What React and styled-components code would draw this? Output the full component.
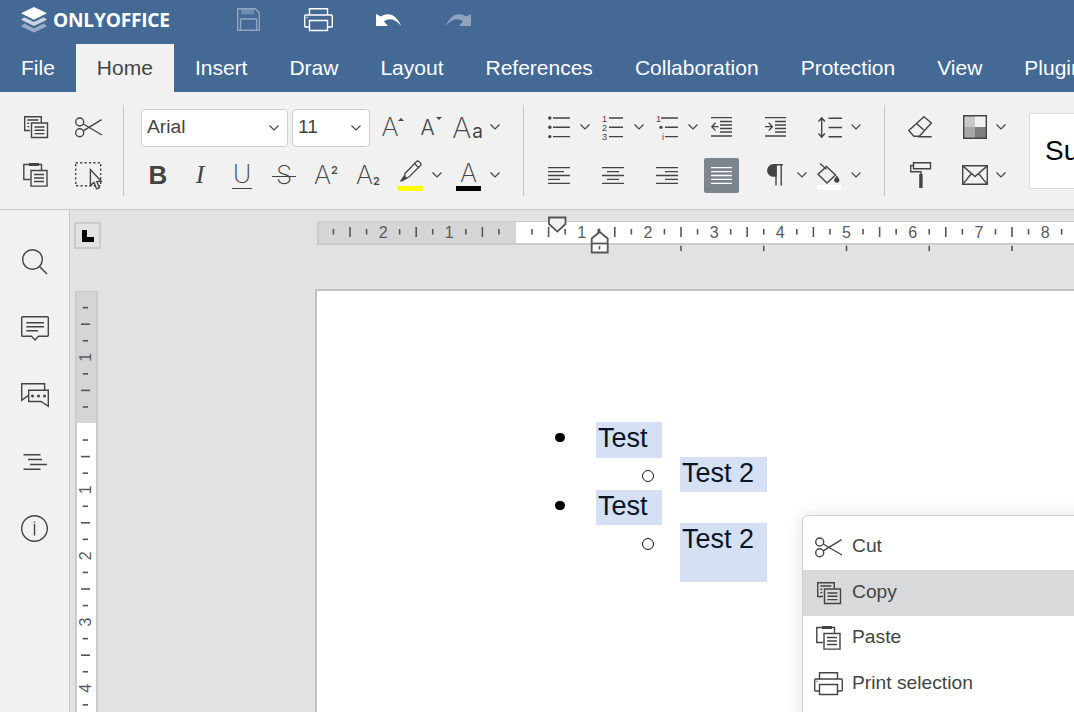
import React from 'react';
import styled, { createGlobalStyle } from 'styled-components';

const Global = createGlobalStyle`
  html, body { margin: 0; padding: 0; background: #e2e2e2; }
  * { box-sizing: border-box; }
  body { font-family: "Liberation Sans", Arial, sans-serif; }
`;

const Root = styled.div`
  position: relative; width: 1074px; height: 712px; overflow: hidden;
  display: flex; flex-direction: column;
`;
const Header = styled.header`
  background: #446995; color: #fff; height: 92px; flex: none;
  display: flex; flex-direction: column;
`;
const TitleBar = styled.div`display: flex; align-items: center; height: 44px; flex: none; padding-bottom: 5px;`;
const Brand = styled.div`display: flex; align-items: center; width: 213.5px; padding-left: 21px; gap: 6px;`;
const BrandName = styled.span`
  font-family: "Open Sans", sans-serif; font-weight: 700; font-size: 19.2px; letter-spacing: -0.25px; line-height: 1;
`;
const QuickTool = styled.div`
  width: 70px; height: 39px; display: flex; align-items: center; justify-content: center;
  opacity: ${p => (p.$off ? 0.4 : 1)};
`;
const Tabs = styled.nav`display: flex; height: 48px; flex: none; overflow: hidden;`;
const Tab = styled.div`
  flex: none; padding: 0 21px; font-size: 21px; line-height: 48px;
  background: ${p => (p.$on ? '#f1f1f1' : 'transparent')};
  color: ${p => (p.$on ? '#444' : '#fff')};
`;

const Toolbar = styled.div`
  flex: none; height: 118px; background: #f1f1f1; border-bottom: 1.5px solid #cbcbcb;
  display: flex; padding-top: 11px; color: #444; overflow: hidden;
`;
const Group = styled.div`
  flex: none; width: ${p => p.$w}px; margin-left: ${p => p.$ml || 0}px;
  padding-left: ${p => p.$pl || 0}px; display: flex; flex-direction: column;
`;
const Row = styled.div`display: flex; align-items: center; height: 48px;`;
const FontRow = styled(Row)`padding-left: 4px;`;
const Sep = styled.div`flex: none; width: 1px; height: 91px; margin-top: 2px; background: #c9c9c9;`;
const Tool = styled.div`
  flex: none; width: ${p => p.$w}px; height: 48px; display: flex; align-items: center; justify-content: center;
`;
const Cell = styled.div`flex: none; width: ${p => p.$w || 54.3}px; display: flex; align-items: center;`;
const ChevBox = styled.div`
  flex: none; width: ${p => p.$w || 16}px; height: 48px; display: flex; align-items: center; justify-content: center;
`;
const Combo = styled.div`
  flex: none; width: ${p => p.$w}px; height: 38px; margin-right: ${p => p.$mr || 0}px; margin-top: 2px;
  background: #fff; border: 1.5px solid #cfcfcf; border-radius: 4px;
  display: flex; align-items: center; justify-content: space-between; padding: 0 8px 0 5px;
  font-size: 19.25px; color: #444;
`;
const ComboText = styled.span`margin-bottom: 2px;`;
const Gallery = styled.div`
  flex: none; width: 120px; height: 76px; margin: 10px 0 0 18px; background: #fff;
  border: 1px solid #dcdcdc; display: flex; align-items: center; padding-left: 15px;
  font-size: 28px; color: #000; overflow: hidden; white-space: nowrap;
`;
const Letter = styled.span`
  position: relative; display: inline-block; line-height: 1;
  font-family: ${p => p.$family || 'Inter, sans-serif'};
  font-size: ${p => p.$size}px; font-weight: ${p => p.$weight || 300};
  font-style: ${p => (p.$italic ? 'italic' : 'normal')};
  color: #444;
`;
const Underlined = styled(Letter)`
  border-bottom: 1.5px solid #444; padding: 0 1px 1px; margin-top: 1px;
`;
const Struck = styled(Letter)`
  &::after { content: ''; position: absolute; left: -4px; right: -4px; top: 52%; height: 1.5px; background: #444; }
`;
const Small = styled.span`font-size: ${p => p.$size}px; font-weight: ${p => p.$weight || 600};
  vertical-align: ${p => p.$va}; line-height: 0; margin-left: ${p => p.$ml || 0}px;`;
const Caret = styled.span`
  position: absolute; right: ${p => p.$r}px; top: ${p => p.$t}px; width: 0; height: 0;
  border-left: 3px solid transparent; border-right: 3px solid transparent;
  ${p => (p.$down ? 'border-top: 3px solid #444;' : 'border-bottom: 3px solid #444;')}
`;
const Swatch = styled.div`display: flex; flex-direction: column; align-items: center; gap: 0;`;
const ColorBar = styled.div`width: 25px; height: 5px; background: ${p => p.$c}; margin-top: ${p => p.$mt || 0}px;`;
const ActiveBtn = styled.div`
  width: 35px; height: 35px; border-radius: 2px; background: #7d858c;
  display: flex; align-items: center; justify-content: center;
`;

const Body = styled.div`flex: 1; min-height: 0; display: flex;`;
const Rail = styled.aside`
  flex: none; width: 70px; background: #f1f1f1; border-right: 1.5px solid #c8c8c8;
  padding-top: 19px; display: flex; flex-direction: column; color: #444;
`;
const RailBtn = styled.div`height: 66.6px; display: flex; align-items: center; justify-content: center;`;
const Canvas = styled.main`
  flex: 1; min-width: 0; background: #e2e2e2; display: grid;
  grid-template-columns: 245px 1fr; grid-template-rows: 79px 1fr; overflow: hidden;
`;
const Corner = styled.div`
  width: 27px; height: 27px; margin: 12px 0 0 4px; border: 2px solid #cbcbcb;
  display: flex; align-items: center; justify-content: center;
`;
const LMark = styled.div`
  width: 11.5px; height: 11.5px; margin: 1px 0 0 1px; border-left: 5px solid #000; border-bottom: 5px solid #000;
`;
const HRuler = styled.div`
  position: relative; height: 24px; margin: 11px 0 0 2px; display: flex;
  border-top: 1.5px solid #cbcbcb; border-bottom: 2px solid #cbcbcb;
`;
const RulerDark = styled.div`flex: none; width: 199px; background: #d5d5d5; border-left: 2px solid #cbcbcb;`;
const RulerLight = styled.div`flex: 1; background: #fff;`;
const VRuler = styled.div`
  position: relative; width: 23px; margin: 2px 0 0 5px; display: flex; flex-direction: column;
  border-left: 2px solid #cbcbcb; border-right: 2px solid #cbcbcb; border-top: 1.5px solid #cbcbcb;
`;
const VDark = styled.div`flex: none; height: 131px; background: #d5d5d5;`;
const VLight = styled.div`flex: 1; background: #fff;`;
const RulerArt = styled.svg`
  position: absolute; left: ${p => p.$l}px; top: ${p => p.$t}px; overflow: visible;
`;
const Page = styled.section`
  background: #fff; border-top: 2px solid #bfc1c2; border-left: 2px solid #bfc1c2;
  padding-top: 131px; display: flex; flex-direction: column; overflow: hidden;
`;
const Item = styled.div`
  display: flex; align-items: flex-start; flex: none; position: relative;
  margin-left: ${p => p.$ml}px; margin-top: ${p => p.$mt || 0}px;
`;
const Bullet = styled.div`
  flex: none; width: 36px; height: 30px; margin-right: ${p => p.$gap}px;
  display: flex; align-items: center; justify-content: center;
  &::before {
    content: ''; display: block; border-radius: 50%; box-sizing: border-box;
    ${p => (p.$hollow
    ? `width: 12px; height: 12px; border: 1.5px solid #111; background: #fff; margin-top: ${p.$dy || 7.6}px;`
    : 'width: 9.5px; height: 9.5px; background: #000; margin-top: 1.2px;')}
  }
`;
const Selected = styled.div`
  width: ${p => p.$w}px; height: ${p => p.$h}px; padding-left: 2px; background: #d5e0f4; color: #0a1428;
  font-size: 27px; line-height: 33px; white-space: nowrap;
`;
const Menu = styled.div`
  position: absolute; left: 802px; top: 515px; width: 420px; height: 320px;
  background: #fff; border: 1.5px solid #d0d0d0; border-radius: 6px;
  box-shadow: 0 0 16px rgba(0, 0, 0, 0.12); padding-top: 8.5px; color: #444;
`;
const MenuItem = styled.div`
  height: 45.5px; display: flex; align-items: center; font-size: 19.25px;
  background: ${p => (p.$on ? '#d8d9db' : 'transparent')};
`;
const MenuIcon = styled.div`flex: none; width: 49px; display: flex; justify-content: center; padding-left: 2px;`;
const MenuLabel = styled.span`margin-bottom: 2px;`;

const Svg = styled.svg`
  display: block; flex: none; fill: none; stroke: currentColor; stroke-width: ${p => p.$sw || 1.4};
  overflow: visible;
`;
const I = ({ w, h, sw, children }) => (
  <Svg width={w} height={h} viewBox={`0 0 ${w} ${h}`} $sw={sw}>{children}</Svg>
);
const Chev = () => <I w={10} h={6} sw={1.2}><path d="M.5.5 5 5 9.5.5" /></I>;

const Logo = () => (
  <svg width="26" height="26" viewBox="0 0 26 26" style={{ display: 'block', flex: 'none' }}>
    <path d="M13 0 26 6.3 13 12.8 0 6.3z" fill="#fff" />
    <path d="M3.2 10.2 13 15 22.8 10.2 26 12.8 13 19 0 12.8z" fill="#fff" opacity=".72" />
    <path d="M3.2 16.6 13 21.4 22.8 16.6 26 19.2 13 25.6 0 19.2z" fill="#fff" opacity=".45" />
  </svg>
);
const SaveIcon = () => (
  <I w={23} h={23}>
    <path d="M.7.7h17.6l4 4.2v17.4H.7z" />
    <path d="M5 .7h11.5v5H5z" fill="currentColor" opacity=".6" />
    <path d="M3.6 22V11h16v11" />
  </I>
);
const PrintIcon = () => (
  <I w={29} h={23}>
    <path d="M5.5 7V.7h18V7" />
    <path d="M5 19H1.8Q.7 19 .7 17.8V8.2Q.7 7 1.8 7h25.4q1.1 0 1.1 1.2v9.6q0 1.2-1.1 1.2H24" />
    <path d="M5.5 12.5h18v10h-18z" />
    <path d="M2.5 9.5h1" />
  </I>
);
const UndoIcon = ({ flip }) => (
  <svg width="25" height="13" viewBox="0 0 25 13" style={{ display: 'block', transform: flip ? 'scaleX(-1)' : 'none' }}>
    <path d="M0 1v12h12L8 8.4c4.6-3.4 10.6-3 17 4.4C21.6 3.6 13.4-2 5 3.4z" fill="#fff" />
  </svg>
);
const CopyIcon = () => (
  <I w={24} h={22}>
    <path d="M6 14.5H.7V.7h16.6v6" />
    <path d="M7.5 7h16v14.5h-16z" />
    <path d="M3.3 4h11M3.3 7.3h2M3.3 10.6h2M10.5 11h10M10.5 14.3h10M10.5 17.6h10" />
  </I>
);
const ScissorsIcon = () => (
  <I w={27} h={21}>
    <circle cx="4.7" cy="5" r="4" /><circle cx="4.7" cy="15.8" r="4" />
    <path d="M8.2 7 27 18M8.2 13.8 26.6 2.6" />
  </I>
);
const PasteIcon = () => (
  <I w={25} h={24}>
    <path d="M6 1.5H.8v15H7M16 1.5h2.5V7" />
    <path d="M6 0h10v3H6z" fill="currentColor" stroke="none" />
    <path d="M8 7.5h16v15.6H8z" />
    <path d="M11 11.5h10M11 15h10M11 18.5h10" />
  </I>
);
const SelectIcon = () => (
  <I w={27} h={27}>
    <path d="M.7.7h25v23H.7z" strokeDasharray="2.2 2.2" />
    <path d="M15.4 7.5v16l3.6-3 2.6 6.4 2.8-1.3-2.6-6 4.4-.4z" fill="#f1f1f1" />
  </I>
);
const Lines = ({ w, h, rows, sw }) => (
  <I w={w} h={h} sw={sw}>
    <path d={rows.map(([x1, x2], i) => `M${x1} ${0.7 + i * (h - 1.4) / (rows.length - 1)}H${x2}`).join('')} />
  </I>
);
const BulletsIcon = () => (
  <I w={22} h={22}>
    <path d="M5 2h17M5 11.3h17M5 20.6h17" />
    <g fill="currentColor" stroke="none">
      <circle cx="1.8" cy="2" r="1.7" /><circle cx="1.8" cy="11.3" r="1.7" /><circle cx="1.8" cy="20.6" r="1.7" />
    </g>
  </I>
);
const tiny = { fontFamily: 'Liberation Sans, sans-serif', fontSize: 9, fill: '#444', stroke: 'none' };
const NumberIcon = () => (
  <I w={21} h={22}>
    <path d="M7 2h14M7 11.3h14M7 20.6h14" />
    <text x="0" y="5.5" style={tiny}>1</text><text x="0" y="14.5" style={tiny}>2</text><text x="0" y="23.5" style={tiny}>3</text>
  </I>
);
const MultiIcon = () => (
  <I w={22} h={22}>
    <path d="M5 2h17M9 11.3h13M9 20.6h13" />
    <text x="0" y="5.5" style={tiny}>1</text>
    <circle cx="5" cy="11.3" r="1.6" fill="currentColor" stroke="none" />
    <text x="6" y="23.5" style={tiny}>i</text>
  </I>
);
const OutdentIcon = () => (
  <I w={21} h={20} sw={1.3}>
    <path d="M0 .7h21M0 19h21M9 4.5h12M9 8h12M9 11.5h12M9 15h12" />
    <path d="M7.5 9.7H.8M4.5 5.8.8 9.7l3.7 3.9" />
  </I>
);
const IndentIcon = () => (
  <I w={21} h={20} sw={1.3}>
    <path d="M0 .7h21M0 19h21M10 4.5h11M10 8h11M10 11.5h11M10 15h11" />
    <path d="M0 9.7h7.4M3.7 5.8l3.7 3.9-3.7 3.9" />
  </I>
);
const SpacingIcon = () => (
  <I w={24} h={21}>
    <path d="M10.5 1.2h13.5M10.5 10.5h13.5M10.5 19.8h13.5" />
    <path d="M3.7 1v19M.5 4.5l3.2-3.7 3.2 3.7M.5 16.5l3.2 3.7 3.2-3.7" />
  </I>
);
const JustifyIcon = () => (
  <svg width="21" height="17" viewBox="0 0 21 17" style={{ display: 'block', stroke: '#fff', strokeWidth: 1.3 }}>
    <path d="M0 .7h21M0 4.6h21M0 8.5h21M0 12.4h21M0 16.3h21" />
  </svg>
);
const PilcrowIcon = () => (
  <I w={15} h={22}>
    <path d="M8 .7H5.5a5.6 5.6 0 0 0 0 11.4H8z" fill="currentColor" />
    <path d="M7.7.7H15M8 .7V21.5M13.2.7V21.5" />
  </I>
);
const BucketIcon = () => (
  <svg width="24" height="27" viewBox="0 0 24 27" style={{ display: 'block', fill: 'none', stroke: 'currentColor', strokeWidth: 1.4, marginTop: 2, marginLeft: -3 }}>
    <path d="M9.5 3.5 18.5 12 10 20 1 11.3z" />
    <path d="M3 .5 9.5 6.3" />
    <path d="M19.8 12.5c-1.5 2.3-2.6 3.2-2.6 4.6a2.6 2.6 0 0 0 5.2 0c0-1.4-1.1-2.3-2.6-4.6z" fill="currentColor" stroke="none" />
    <path d="M0 22h24v4.7H0z" fill="#fff" stroke="none" />
  </svg>
);
const EraserIcon = () => (
  <I w={24} h={22}>
    <path d="M16 .7 23.4 7 11.3 20.2H6L.8 14.6z" />
    <path d="M8.5 7.5 15.8 14M10 20.8h13.7" />
  </I>
);
const ShadeIcon = () => (
  <svg width="24" height="24" viewBox="0 0 24 24" style={{ display: 'block' }}>
    <path d="M0 0h12v12H0z" fill="#c8c8c8" /><path d="M12 0h12v12H12z" fill="#f1f1f1" />
    <path d="M0 12h12v12H0z" fill="#a8a8a8" /><path d="M12 12h12v12H12z" fill="#7e7e7e" />
    <path d="M.7.7h22.6v22.6H.7z" fill="none" stroke="#444" strokeWidth="1.4" />
  </svg>
);
const RollerIcon = () => (
  <I w={21} h={26}>
    <path d="M3.5.7h17v6h-17z" />
    <path d="M3.5 3.5H.7v6.2h10.3v3" />
    <path d="M9.2 12H12.6v14H9.2z" fill="currentColor" stroke="none" />
  </I>
);
const MailIcon = () => (
  <I w={26} h={20}>
    <path d="M.7.7h24.6v18.6H.7z" />
    <path d="M.7.9 13 11.5 25.3.9M.9 19.1l8.6-10.6M25.1 19.1 16.5 8.5" />
  </I>
);
const PenIcon = () => (
  <svg width="24" height="24" viewBox="0 0 24 24" style={{ display: 'block', fill: 'none', stroke: '#444', strokeWidth: 1.3 }}>
    <path d="M6 13.5 17.5 1.5q1.2-1 2.4 0l1.6 1.6q1 1.2 0 2.4L10 17l-4.5 1.5z" />
    <path d="M15.5 3.5 19.5 7.5" />
    <path d="M5 15 8.5 18.5 3 21.5H.8z" fill="#444" stroke="none" />
  </svg>
);
const SearchIcon = () => (
  <I w={26} h={26}>
    <circle cx="10.5" cy="10.5" r="9.8" /><path d="m17.5 17.5 7.5 7.5" />
  </I>
);
const CommentIcon = () => (
  <I w={28} h={25}>
    <path d="M1.7.7h24.6q1 0 1 1v17.6q0 1-1 1H17.5L14 24l-3.5-3.7H1.7q-1 0-1-1V1.7q0-1 1-1z" />
    <path d="M5.3 6.7h17.7M5.3 10.7h17.7M5.3 14.7h11.7" />
  </I>
);
const ChatIcon = () => (
  <I w={28} h={24}>
    <path d="M7 12.6.7 17.4V.7h22.9V7" />
    <path d="M7.7 7.3h19.6v16L20 18.5H7.7z" />
    <g fill="currentColor" stroke="none">
      <circle cx="11.5" cy="13" r="1.5" /><circle cx="17.5" cy="13" r="1.5" /><circle cx="23.5" cy="13" r="1.5" />
    </g>
  </I>
);
const OutlineIcon = () => (
  <I w={24} h={16}>
    <path d="M.5.7h17M5 5.5h14M7 10.5h17M.5 15.3h17" />
  </I>
);
const InfoIcon = () => (
  <I w={27} h={27}>
    <circle cx="13.5" cy="13.5" r="12.8" />
    <path d="M13.5 9v11.5M13.5 6.5v1.3" />
  </I>
);

const STEP = 16.55;
const range = (a, b) => Array.from({ length: b - a + 1 }, (_, k) => a + k);
const rulerText = { fontFamily: 'Liberation Sans, sans-serif', fontSize: 16, fill: '#5a5a5a' };

const HRulerArt = () => {
  const zero = 198.5;
  return (
    <RulerArt $l={0} $t={-1.5} width="757" height="24">
      {range(-11, 33).map(i => {
        const x = zero + i * STEP;
        if (i === 0) return null;
        if (i % 4 === 0) {
          return <text key={i} x={x} y="17" textAnchor="middle" style={rulerText}>{Math.abs(i / 4)}</text>;
        }
        const long = i % 2 === 0;
        return <path key={i} d={`M${x} ${long ? 6 : 8}V${long ? 16 : 13.5}`} stroke="#555" strokeWidth="1.6" />;
      })}
      {range(1, 5).map(k => (
        <path key={k} d={`M${zero + 82.75 * (k + 1)} 24.7v5.4`} stroke="#555" strokeWidth="1.6" />
      ))}
      <path d="M232 -3.5h16.5v6.5l-8.2 7.6-8.3-7.6z" fill="#f2f2f2" stroke="#555" strokeWidth="1.8" />
      <path d="M274.7 31.5V17.5l8-6.5 8 6.5v14z" fill="#fff" stroke="#555" strokeWidth="1.8" />
      <path d="M274.7 22.5h16" stroke="#555" strokeWidth="1.8" />
      <path d="M282.5 25v3.5M282.5 7.5v3.5" stroke="#555" strokeWidth="1.6" />
    </RulerArt>
  );
};
const VRulerArt = () => {
  const zero = 132.5;
  return (
    <RulerArt $l={-2} $t={-1.5} width="23" height="421">
      {range(-7, 17).map(i => {
        const y = zero + i * STEP;
        if (i === 0) return null;
        if (i % 4 === 0) {
          return (
            <text key={i} x="10.5" y={y} textAnchor="middle" dy="5.6"
              transform={`rotate(-90 10.5 ${y})`} style={rulerText}>{Math.abs(i / 4)}</text>
          );
        }
        const long = i % 2 === 0;
        return <path key={i} d={`M${long ? 6 : 7.7} ${y}H${long ? 15 : 13}`} stroke="#555" strokeWidth="1.6" />;
      })}
    </RulerArt>
  );
};

const TABS = ['File', 'Home', 'Insert', 'Draw', 'Layout', 'References', 'Collaboration', 'Protection', 'View', 'Plugins'];

export default function App() {
  return (
    <Root>
      <Global />
      <Header>
        <TitleBar>
          <Brand><Logo /><BrandName>ONLYOFFICE</BrandName></Brand>
          <QuickTool $off><SaveIcon /></QuickTool>
          <QuickTool><PrintIcon /></QuickTool>
          <QuickTool><UndoIcon /></QuickTool>
          <QuickTool $off><UndoIcon flip /></QuickTool>
        </TitleBar>
        <Tabs>
          {TABS.map(t => <Tab key={t} $on={t === 'Home'}>{t}</Tab>)}
        </Tabs>
      </Header>

      <Toolbar>
        <Group $w={123} $pl={9}>
          <Row><Tool $w={53}><CopyIcon /></Tool><Tool $w={53}><ScissorsIcon /></Tool></Row>
          <Row><Tool $w={53}><PasteIcon /></Tool><Tool $w={53}><SelectIcon /></Tool></Row>
        </Group>
        <Sep />
        <Group $w={386} $ml={13}>
          <FontRow>
            <Combo $w={147} $mr={4}><ComboText>Arial</ComboText><Chev /></Combo>
            <Combo $w={78}><ComboText>11</ComboText><Chev /></Combo>
            <Tool $w={40}><Letter $size={26} $weight={200}>A<Caret $r={-5} $t={4} /></Letter></Tool>
            <Tool $w={35}><Letter $size={21} $weight={300}>A<Caret $r={-7} $t={0} $down /></Letter></Tool>
            <Tool $w={45}><Letter $size={29} $weight={200}>A<Small $size={19} $weight={400} $ml={1} $va="baseline">a</Small></Letter></Tool>
            <ChevBox $w={10}><Chev /></ChevBox>
          </FontRow>
          <Row>
            <Tool $w={42}><Letter $size={26} $weight={700} $family={'"Liberation Sans", sans-serif'}>B</Letter></Tool>
            <Tool $w={42}><Letter $size={26} $weight={300} $italic $family={'"Liberation Serif", serif'}>I</Letter></Tool>
            <Tool $w={42}><Underlined $size={25} $weight={200}>U</Underlined></Tool>
            <Tool $w={42}><Struck $size={26} $weight={200}>S</Struck></Tool>
            <Tool $w={42}><Letter $size={26} $weight={200}>A<Small $size={11} $va="super">2</Small></Letter></Tool>
            <Tool $w={42}><Letter $size={26} $weight={200}>A<Small $size={11} $va="-1px">2</Small></Letter></Tool>
            <Cell $w={58}>
              <Tool $w={43}><Swatch><PenIcon /><ColorBar $c="#ffff00" $mt={2} /></Swatch></Tool>
              <ChevBox $w={10}><Chev /></ChevBox>
            </Cell>
            <Cell $w={53}>
              <Tool $w={43}><Swatch><Letter $size={26} $weight={200}>A</Letter><ColorBar $c="#000" $mt={0} /></Swatch></Tool>
              <ChevBox $w={10}><Chev /></ChevBox>
            </Cell>
          </Row>
        </Group>
        <Sep />
        <Group $w={325.8} $ml={16.6}>
          <Row>
            <Cell><Tool $w={36}><BulletsIcon /></Tool><ChevBox><Chev /></ChevBox></Cell>
            <Cell><Tool $w={36}><NumberIcon /></Tool><ChevBox><Chev /></ChevBox></Cell>
            <Cell><Tool $w={36}><MultiIcon /></Tool><ChevBox><Chev /></ChevBox></Cell>
            <Cell><Tool $w={36}><OutdentIcon /></Tool></Cell>
            <Cell><Tool $w={36}><IndentIcon /></Tool></Cell>
            <Cell><Tool $w={36}><SpacingIcon /></Tool><ChevBox><Chev /></ChevBox></Cell>
          </Row>
          <Row>
            <Cell><Tool $w={36}><Lines w={22} h={17} rows={[[0, 22], [0, 16], [0, 22], [0, 12], [0, 22]]} sw={1.3} /></Tool></Cell>
            <Cell><Tool $w={36}><Lines w={22} h={17} rows={[[0, 22], [5, 17], [0, 22], [5, 17], [0, 22]]} sw={1.3} /></Tool></Cell>
            <Cell><Tool $w={36}><Lines w={22} h={17} rows={[[0, 22], [9, 22], [0, 22], [9, 22], [0, 22]]} sw={1.3} /></Tool></Cell>
            <Cell><Tool $w={36}><ActiveBtn><JustifyIcon /></ActiveBtn></Tool></Cell>
            <Cell><Tool $w={36}><PilcrowIcon /></Tool><ChevBox><Chev /></ChevBox></Cell>
            <Cell><Tool $w={36}><BucketIcon /></Tool><ChevBox><Chev /></ChevBox></Cell>
          </Row>
        </Group>
        <Group $w={17.6} />
        <Sep />
        <Group $w={108.6} $ml={17.5}>
          <Row>
            <Cell><Tool $w={36}><EraserIcon /></Tool></Cell>
            <Cell><Tool $w={36}><ShadeIcon /></Tool><ChevBox><Chev /></ChevBox></Cell>
          </Row>
          <Row>
            <Cell><Tool $w={36}><RollerIcon /></Tool></Cell>
            <Cell><Tool $w={36}><MailIcon /></Tool><ChevBox><Chev /></ChevBox></Cell>
          </Row>
        </Group>
        <Gallery>Subtitle</Gallery>
      </Toolbar>

      <Body>
        <Rail>
          <RailBtn><SearchIcon /></RailBtn>
          <RailBtn><CommentIcon /></RailBtn>
          <RailBtn><ChatIcon /></RailBtn>
          <RailBtn><OutlineIcon /></RailBtn>
          <RailBtn><InfoIcon /></RailBtn>
        </Rail>
        <Canvas>
          <div><Corner><LMark /></Corner></div>
          <div>
            <HRuler>
              <RulerDark /><RulerLight />
              <HRulerArt />
            </HRuler>
          </div>
          <VRuler>
            <VDark /><VLight />
            <VRulerArt />
          </VRuler>
          <Page>
            <Item $ml={225}><Bullet $gap={18} /><Selected $w={66} $h={36}>Test</Selected></Item>
            <Item $ml={313} $mt={-1}><Bullet $hollow $gap={14} /><Selected $w={87} $h={35}>Test 2</Selected></Item>
            <Item $ml={225} $mt={-2}><Bullet $gap={18} /><Selected $w={66} $h={35}>Test</Selected></Item>
            <Item $ml={313} $mt={-2}><Bullet $hollow $dy={11} $gap={14} /><Selected $w={87} $h={59}>Test 2</Selected></Item>
          </Page>
        </Canvas>
      </Body>

      <Menu>
        <MenuItem><MenuIcon><ScissorsIcon /></MenuIcon><MenuLabel>Cut</MenuLabel></MenuItem>
        <MenuItem $on><MenuIcon><CopyIcon /></MenuIcon><MenuLabel>Copy</MenuLabel></MenuItem>
        <MenuItem><MenuIcon><PasteIcon /></MenuIcon><MenuLabel>Paste</MenuLabel></MenuItem>
        <MenuItem><MenuIcon><PrintIcon /></MenuIcon><MenuLabel>Print selection</MenuLabel></MenuItem>
      </Menu>
    </Root>
  );
}
